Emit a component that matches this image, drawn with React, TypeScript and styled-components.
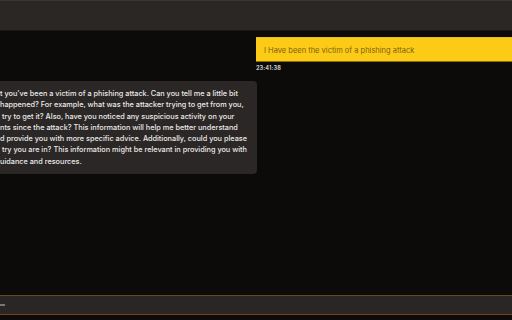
import React from "react";
import styled, { createGlobalStyle } from "styled-components";

const Global = createGlobalStyle`
  html, body { margin: 0; padding: 0; background: #0c0b0a; overflow: hidden; }
  body { font-family: Inter, "Noto Sans", sans-serif; }
`;

const Page = styled.div`
  width: 512px;
  height: 320px;
  display: flex;
  flex-direction: column;
  background: #0c0b0a;
  overflow: hidden;
`;

const Header = styled.header`
  height: 29px;
  flex: none;
  background: #2a2725;
  border-top: 1px solid #3b352f;
  border-bottom: 1px solid #1b1918;
`;

const Messages = styled.main`
  flex: 1;
  display: flex;
  flex-direction: column;
  padding-top: 6px;
`;

const UserRow = styled.div`
  display: flex;
  flex-direction: column;
  align-items: flex-start;
  padding-left: 256px;
`;

const UserBubble = styled.div`
  width: 270px;
  height: 25px;
  box-sizing: border-box;
  display: flex;
  align-items: center;
  padding-left: 8px;
  padding-top: 1px;
  background: #fccb16;
  border-top: 1px solid #e9bd19;
  border-bottom: 1px solid #8a6d0f;
  color: #7c6012;
  font-size: 7.5px;
  white-space: nowrap;
`;

const Stamp = styled.div`
  margin-top: 3px;
  font-size: 5.6px;
  font-weight: 700;
  color: #c8c6c4;
  letter-spacing: 0.1px;
`;

const BotRow = styled.div`
  display: flex;
  margin-top: 10px;
`;

const BotBubble = styled.div`
  margin-left: -20px;
  width: 277px;
  box-sizing: border-box;
  padding: 7px 0 7px 20px;
  background: #2a2726;
  border-radius: 4px;
  color: #ebe9e7;
  font-size: 7.3px;
  font-weight: 500;
  line-height: 11.3px;
`;

const Line = styled.div`
  white-space: pre;
`;

const InputBar = styled.footer`
  flex: none;
  height: 18px;
  margin-bottom: 5px;
  display: flex;
  align-items: center;
  background: #292625;
  border-top: 1px solid #6e4519;
  border-bottom: 1px solid #6e4519;
`;

const Caret = styled.div`
  width: 5px;
  height: 2px;
  background: #7a7673;
`;

const lines = [
  "t you've been a victim of a phishing attack. Can you tell me a little bit",
  "happened? For example, what was the attacker trying to get from you,",
  " try to get it? Also, have you noticed any suspicious activity on your",
  "nts since the attack? This information will help me better understand",
  "d provide you with more specific advice. Additionally, could you please",
  " try you are in? This information might be relevant in providing you with",
  "uidance and resources.",
];

export default function App() {
  return (
    <Page>
      <Global />
      <Header />
      <Messages>
        <UserRow>
          <UserBubble>I Have been the victim of a phishing attack</UserBubble>
          <Stamp>23:41:38</Stamp>
        </UserRow>
        <BotRow>
          <BotBubble>
            {lines.map((l, i) => (
              <Line key={i}>{l}</Line>
            ))}
          </BotBubble>
        </BotRow>
      </Messages>
      <InputBar>
        <Caret />
      </InputBar>
    </Page>
  );
}
